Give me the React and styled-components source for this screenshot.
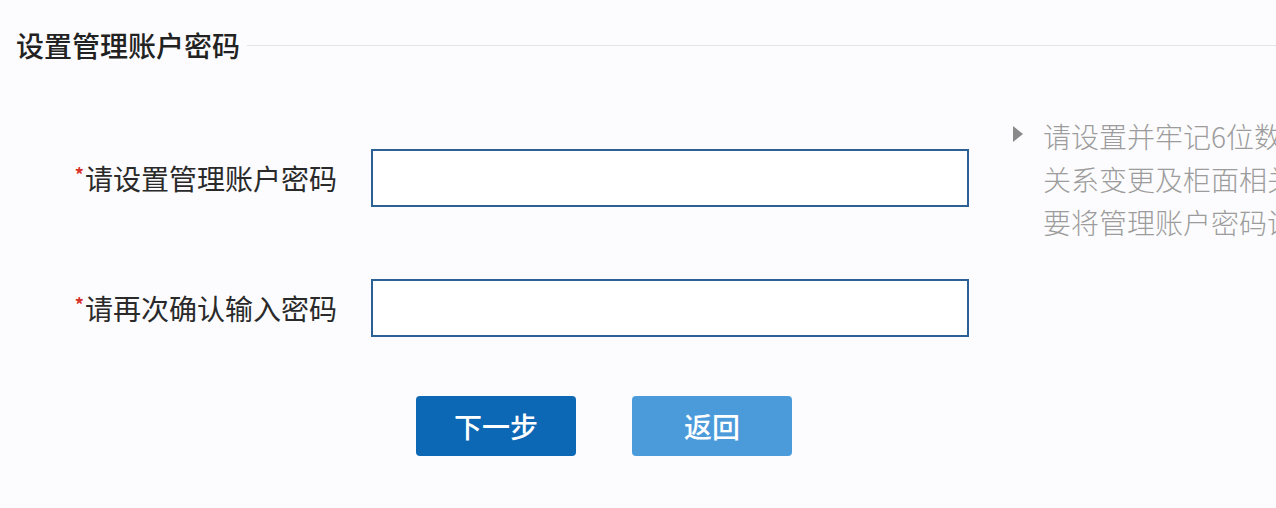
import React from 'react';
import styled, { createGlobalStyle } from 'styled-components';

const GlobalStyle = createGlobalStyle`
  html, body {
    margin: 0;
    padding: 0;
    background: #fcfcfe;
    overflow: hidden;
  }
  body {
    font-family: "Noto Sans CJK SC", "Noto Sans", sans-serif;
  }
`;

const Page = styled.div`
  width: 1276px;
  height: 508px;
  overflow: hidden;
`;

const Header = styled.div`
  display: flex;
  align-items: center;
  padding: 27px 0 0 16px;
`;

const Title = styled.h2`
  margin: 0;
  font-size: 28px;
  line-height: 36px;
  font-weight: 500;
  color: #222;
  white-space: nowrap;
`;

const Rule = styled.div`
  flex: 1;
  height: 1px;
  background: #e4e4e8;
  margin-left: 7px;
`;

const Body = styled.div`
  display: flex;
  margin-top: 52px;
`;

const FormColumn = styled.div`
  width: 969px;
  flex-shrink: 0;
  padding-top: 34px;
  display: grid;
  grid-template-columns: 337px 598px;
  column-gap: 34px;
  row-gap: 72px;
  align-items: center;
`;

const Label = styled.label`
  text-align: right;
  font-size: 28px;
  line-height: 36px;
  color: #2a2a2a;
  white-space: nowrap;
`;

const Star = styled.sup`
  color: #d8322c;
  font-size: 18px;
  font-weight: 700;
  vertical-align: 8px;
  line-height: 0;
  margin-right: 1px;
`;

const Input = styled.input`
  box-sizing: border-box;
  width: 598px;
  height: 58px;
  border: 2px solid #2b6194;
  background: #fff;
  outline: none;
  font-size: 20px;
  padding: 0 12px;
`;

const Actions = styled.div`
  grid-column: 2;
  display: flex;
  gap: 56px;
  margin-left: 45px;
  margin-top: -13px;
`;

const Button = styled.button`
  width: 160px;
  height: 60px;
  border: none;
  border-radius: 4px;
  background: ${p => (p.$variant === 'light' ? '#4b9bdb' : '#0c68b5')};
  color: #fff;
  font-family: "Noto Sans CJK SC", sans-serif;
  font-size: 28px;
  font-weight: 500;
  cursor: pointer;
`;

const Hint = styled.div`
  display: flex;
  margin-left: 44px;
  gap: 20px;
`;

const Arrow = styled.span`
  width: 0;
  height: 0;
  margin-top: 11px;
  border-left: 10px solid #8a8a8a;
  border-top: 8px solid transparent;
  border-bottom: 8px solid transparent;
  flex-shrink: 0;
`;

const HintText = styled.div`
  font-size: 28px;
  line-height: 43px;
  color: #9c9c9c;
  font-weight: 300;
  white-space: nowrap;
`;

export default function App() {
  return (
    <Page>
      <GlobalStyle />
      <Header>
        <Title>设置管理账户密码</Title>
        <Rule />
      </Header>
      <Body>
        <FormColumn>
          <Label htmlFor="pwd"><Star>*</Star>请设置管理账户密码</Label>
          <Input id="pwd" type="password" />
          <Label htmlFor="pwd2"><Star>*</Star>请再次确认输入密码</Label>
          <Input id="pwd2" type="password" />
          <Actions>
            <Button>下一步</Button>
            <Button $variant="light">返回</Button>
          </Actions>
        </FormColumn>
        <Hint>
          <Arrow />
          <HintText>
            <div>请设置并牢记6位数字密码，在办理银期</div>
            <div>关系变更及柜面相关业务时，需</div>
            <div>要将管理账户密码设置妥当。</div>
          </HintText>
        </Hint>
      </Body>
    </Page>
  );
}
